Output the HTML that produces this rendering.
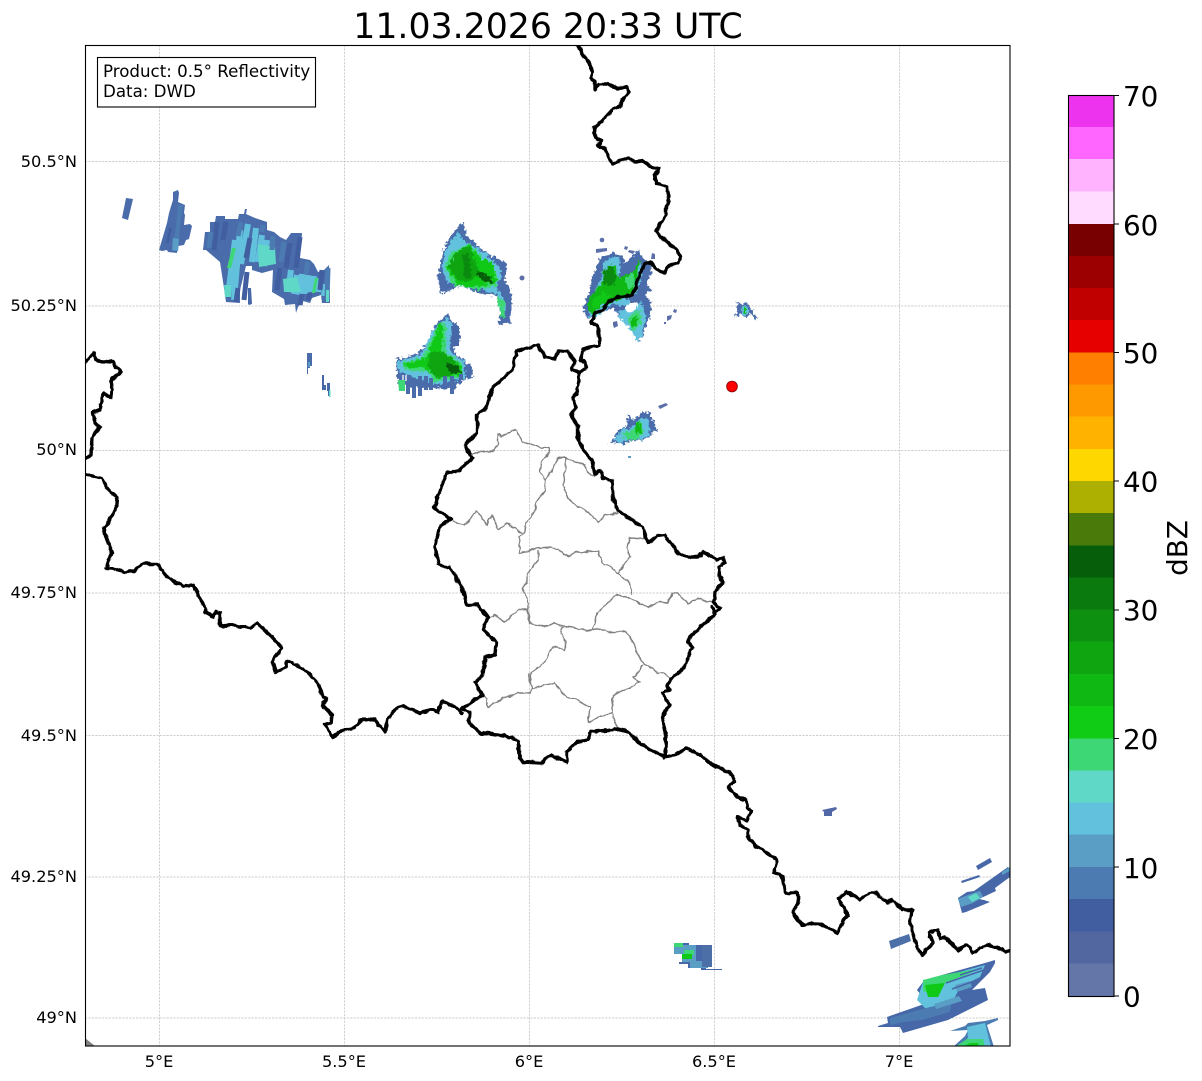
<!DOCTYPE html>
<html><head><meta charset="utf-8"><title>Radar</title>
<style>
html,body{margin:0;padding:0;background:#fff}
svg{display:block}
text{font-family:"DejaVu Sans",sans-serif;fill:#000}
</style></head><body>
<svg width="1202" height="1081" viewBox="0 0 1202 1081" xmlns="http://www.w3.org/2000/svg">
<defs>
<clipPath id="ax"><rect x="85" y="45" width="925" height="1001"/></clipPath>
<filter id="jag" filterUnits="userSpaceOnUse" x="0" y="0" width="1202" height="1081" color-interpolation-filters="sRGB">
<feTurbulence type="fractalNoise" baseFrequency=".32" numOctaves="2" seed="4" result="n"/>
<feDisplacementMap in="SourceGraphic" in2="n" scale="7" xChannelSelector="R" yChannelSelector="G"/>
</filter>
<filter id="wig" filterUnits="userSpaceOnUse" x="0" y="0" width="1202" height="1081" color-interpolation-filters="sRGB">
<feTurbulence type="fractalNoise" baseFrequency=".14" numOctaves="2" seed="9" result="n"/>
<feDisplacementMap in="SourceGraphic" in2="n" scale="4" xChannelSelector="R" yChannelSelector="G"/>
</filter>
</defs>
<rect width="1202" height="1081" fill="#fff"/>
<text x="548" y="38" font-size="34.7" text-anchor="middle">11.03.2026 20:33 UTC</text>

<g stroke="#bdbdbd" stroke-width=".7" stroke-dasharray="2.2 1.2" fill="none">
<path d="M159.5 45V1046M344.5 45V1046M529.5 45V1046M714.5 45V1046M899.5 45V1046"/>
<path d="M85 161.5H1010M85 306H1010M85 450.5H1010M85 593H1010M85 735.5H1010M85 877H1010M85 1018H1010"/>
</g>

<g clip-path="url(#ax)">
<!-- west small, crisp columns -->
<path d="M126 198l7 1-5 21-6-2z" fill="#4a6cab"/>
<path d="M173 192l5-2 1 3-1 9 7 3-1 8 1 2-1 10 6-1 2 2-3 13-3 1-2 5-6 1-1 7-9-1-1-2-5 1-3-1 8-27 2-10 3-10 1-3z" fill="#4a6cab"/>
<path d="M178 205h5l-3 22-2 24h-6l4-24z" fill="#4c7bb2"/>
<path d="M173 238l6 1-1 12-6-1z" fill="#5a9dc5"/>
<path d="M169 228l3 0-3 15-3 0z" fill="#415ea1"/>

<!-- big west blob, stepped -->
<path d="M203 250L205 232L210 232L210 222L215 222L216 216L225 216L225 219L238 219L239 214L244 214L245 209L247 209L246 214L255 218L267 222L267 230L274 232L280 237L286 240L291 233L302 233L300 258L310 260L314 264L318 272L324 270L329 265L330 303L322 303L321 295L312 298L310 303L303 301L298 307L296 313L295 304L285 305L284 299L272 292L273 270L262 273L252 270L252 266L246 266L243 278L240 290L240 303L226 302L224 288L220 262L206 250Z" fill="#4a6cab"/>
<g fill="none" stroke="#62c2dd" stroke-width="6">
<path d="M228 296L235 240M234 300L240 230M241 264L248 224M252 262L256 228M258 262L262 235M264 266L267 240M270 264L271 246"/>
<path d="M288 292L291 270M294 294L297 275M300 295L302 274M306 294L308 275M312 292L314 276M318 292L319 278M324 296L325 284"/>
</g>
<path d="M258 244l17 3 1 17-17 3z" fill="#5fd8c8"/>
<path d="M283 279l14-2 4 15-17 0z" fill="#5fd8c8"/>
<path d="M232 248l4 0-5 20-4 0z" fill="#3dd875"/>
<path d="M315 278l3 0-3 15-3 0z" fill="#3dd875"/>
<g fill="none" stroke="#415ea1" stroke-width="5">
<path d="M214 250L217 222M223 240L226 222M246 258L250 238M244 300L247 272M236 302L238 288M277 290L280 268M286 268L290 243M296 268L300 237M320 290L322 270M300 305L302 294M308 300L310 293"/>
</g>
<g fill="none" stroke="#4c7bb2" stroke-width="5">
<path d="M209 248L211 232M238 236L241 222M262 232L263 225M272 250L273 236M281 262L284 242M306 274L308 262M327 300L328 268"/>
</g>
<path d="M248 288h3l1 16-3 1-1-1z" fill="#4667a8"/>
<path d="M224 285h7v12h-6z" fill="#5fd8c8"/>
<path d="M326 290l3 0 0 12-3 0z" fill="#5fd8c8"/>

<g filter="url(#jag)">
<!-- north central blob -->
<path d="M463 222l2 7 1 6 7 6 14 12 20 11-2 19 5 4 2 14-2 22-12 3 2-13-2-17-18-2-20-8-20 8-2-18 4-20 3-10 7-12z" fill="#4a6cab"/>
<path d="M458 232l7 9 22 13 15 17-5 17 9 16-2 14-4-6-2-18-18-5-18-5-15-2-5-13 3-18z" fill="#62c2dd"/>
<path d="M450 253l20-9 27 29v13l-20 4-24-5-8-17z" fill="#3dd875"/>
<path d="M455 253l15-8 10 13 13 5 4 20-24 4-16-2-10-17z" fill="#10c816"/>
<path d="M456 252l14-6 9 26-9 10-13-2-9-15z" fill="#0fa510"/>
<path d="M462 254l6 0 4 24-7 0z" fill="#0b8a10"/>
<path d="M477 271l13 5 4 7h-9l-9-8z" fill="#075e0a"/>
<path d="M497 297l8 4-2 8-6-3zM500 308l5 2-1 8-4-3z" fill="#3dd875"/>
<!-- lower central blob -->
<path d="M448 313L452 322L458 325L460 340L453 348L457 355L473 367L472 378L462 380L456 388L410 388L398 384L396 360L418 353L427 342L435 325Z" fill="#4a6cab"/>
<path d="M447 317L452 325L450 352L465 362L465 378L435 385L400 372L397 362L420 355L433 330Z" fill="#62c2dd"/>
<path d="M443 322L447 328L445 352L462 363L463 377L433 382L430 372L405 370L403 363L423 357L435 332Z" fill="#3dd875"/>
<path d="M440 323L443 330L442 352L460 365L463 375L437 378L423 367L410 368L404 364L426 358L433 340Z" fill="#10c816"/>
<path d="M430 352H444L457 362L450 377L435 378L427 366Z" fill="#0fa510"/>
<path d="M445 362L458 366L463 373L450 373Z" fill="#075e0a"/>

<!-- Vianden blob -->
<path d="M600 258l12-5 10 2 3 8 13-13 4 7 8 6 2 7-5 15 5 5-7 5 7 7-2 15-8 21-4 3-8-13-10-10-7-10-8 2-12 8-8-1-2-10 7-17 2-12z" fill="#4a6cab"/>
<path d="M604 262l8-5 8 2-1 18 16-5 5-10 2 14-6 18-10 3 4 7-6 2-12-2-14 12-8 1-1-8 6-18 6-12z" fill="#62c2dd"/>
<path d="M588 308l2-11 13-15 4-15 8-2 3 12 15-5 8-14-3 14-5 23-30 10-11 10z" fill="#10b814"/>
<path d="M603 270l9-4 6 11-5 9-9-2z" fill="#0b8a10"/>
<path d="M592 300l12-8 8 4-14 10-5 4z" fill="#10c816"/>
<path d="M625 279l8-7 3 14-8 3z" fill="#3dd875"/>
<path d="M627 305l15-3 4 13-5 23-4 3-7-12-9-9-3-8 9-2 4 2z" fill="#62c2dd"/>
<path d="M628 317l12-7 2 13-8 7-4-4z" fill="#3dd875"/>
<path d="M630 318l7-3 0 9-5 3z" fill="#10b814"/>
<path d="M626 305l12-3-2 9-9 2z" fill="#fff"/>
<!-- east small -->
<path d="M736 302l6 2 5-2 5 8 5 8-2 1-5-5-3 3-3-1-5-2-4 4-1-2 4-5-1-5z" fill="#4a6cab"/>
<path d="M742 306l5 1 1 7-5 2z" fill="#62c2dd"/>
<path d="M744 308l2 0 0 5-2 0z" fill="#10b814"/>
<!-- blob 8 -->
<path d="M609 443l5-4 4-9 9-4 1-12 5 7 9-9 8 0 4 12 3 6-10 9-18 2-6 4-3-2-7 0z" fill="#4a6cab"/>
<path d="M614 440l8-11 10-1 8-9 8-1 2 16-8 5-14 1-8 3z" fill="#62c2dd"/>
<path d="M622 433l10-3 8-9 4 11-6 7-11 1z" fill="#3dd875"/>
<path d="M635 424l5-2 2 10-5 3z" fill="#10b814"/>
</g>

<!-- hatch under lower central blob -->
<g fill="none" stroke="#4a6cab" stroke-width="4">
<path d="M408 378v16M414 378v20M420 376v20M426 376v14M431 378v12M445 376v13M452 376v18M461 374v6"/>
</g>
<path d="M398 380h7v11h-6z" fill="#3dd875"/>
<g stroke="#fff" stroke-width="1.300"><path d="M403 375v5M406 375v6M411 389v9M417 390v8M423 389v10M434 388v10M441 389v9M448 388v8"/></g>
<path d="M451 326h8v20h-6z" fill="#4667a8"/>

<!-- crisp pieces -->
<g fill="#5a6fa8"><circle cx="602" cy="240" r="2.300"/><circle cx="522" cy="278" r="2.500"/><path d="M596 249l11-1 0 3-11 2zM625 246l3 1-1 3-3-1zM629 250l6 1-2 3-5-2zM652 253l3 1 0 5-4 0zM613 322l4-1 1 5-4 2-1-3zM674 309l3 1-1 3-3-1zM667 316l5-1-1 4-4 2zM664 322l2 0 0 2-2 0zM658 406l8-3 2 2-8 4z"/></g>
<path d="M628 456h3v2h-3z" fill="#5a9dc5"/>
<path d="M307 353h5v13h-2v2h-2v6h-1z" fill="#4a6cab"/>
<path d="M308 362h2v5h-2z" fill="#5a9dc5"/>
<path d="M322 375h2v10h2v5h-4zM327 383h3v13h-2v-5h-1z" fill="#4667a8"/>
<path d="M329 390h1.500v7h-1.500z" fill="#5fd8c8"/>

<!-- south centre -->
<path d="M674 943h15v2h23v22h-6v2h16v1h-21v-2h-13v-4h-9v-2h4v-8h-9v-9z" fill="#4667a8"/>
<path d="M674 945h22v16h12v7h-18v-6h-8v-8h-8z" fill="#5a9dc5"/>
<path d="M674 943h9v4h-9zM684 950h10v5h-10z" fill="#3dd875"/>
<path d="M682 954h10v5h-10z" fill="#10c816"/>
<path d="M702 945h10v22h-10z" fill="#4c6fa8"/>
<path d="M822 810l14-3 1 2-5 3v4h-8v-4z" fill="#5267a5"/>
<path d="M889 941l20-7 2 7-20 8z" fill="#4c6fa8"/>
<path d="M976 866l14-8 2 4-14 8zM961 881l18-6 1 2-18 6z" fill="#4667a8"/>
<path d="M958 898l9-6 7-1 34-24 2 3v7l-15 11 1 3-17 8 5 1 6 2-24 10-4 1z" fill="#4667a8"/>
<path d="M958 899l10-4 12-4 3 6-10 6-12 4z" fill="#5a9dc5"/>
<path d="M968 897l8-4 4 5-8 4z" fill="#5fd8c8"/>
<path d="M1002 872l8-5v4l-8 4z" fill="#5a9dc5"/>

<!-- SE big -->
<path d="M887 1017l40-14-10-13 6-8 19-7 43-12 10-3 0 3-5 9-18 18 13-2 3 12-40 20-45 13-3-6-22 0 0-1 10-3z" fill="#4667a8"/>
<path d="M923 982l62-17-5 12-20 10-8 16-25 7-10-10z" fill="#62c2dd"/>
<path d="M890 1018l40-11 22-5-2 10-28 8-18 2-14 3z" fill="#4c7bb2"/>
<path d="M923 980l19-5 36-6-5 3-28 11-7 14-10-4-5-2z" fill="#3dd875"/>
<path d="M925 985l20-2-7 14h-10z" fill="#10c816"/>
<path d="M955 985l15-4 2 6-15 5z" fill="#5a9dc5"/>
<path d="M934 1004l25-8 3 5-26 8z" fill="#5a9dc5"/>
<g fill="none" stroke="#4667a8" stroke-width="1.500"><path d="M946 983l38-13M952 989l28-10M960 975l22-7"/></g>
<path d="M950 1031L965 1026L968 1023L985 1021L998 1018L998 1020L987 1025L994 1047L953 1047L965 1036L968 1030Z" fill="#4c7bb2"/>
<path d="M967 1027L985 1023L991 1047L958 1047L968 1038Z" fill="#62c2dd"/>
<path d="M955 1047L967 1039L983 1039L985 1047Z" fill="#3dd875"/>
<path d="M962 1047l8-4 8 0 1 4z" fill="#10c816"/>

<!-- cantons -->
<g fill="none" stroke="#808080" stroke-width="1.400" stroke-linejoin="round" filter="url(#wig)">
<path d="M470 454l13-2 12-2 3-5v-12l4 4 13-8 8 13 19 6 7-1 1 6-9 9-1 10 6 8 12-22 7-1 1 11-3 17 5 13 10 9 10 5 10 11 7-8 13-2"/>
<path d="M565 457l3 2 17 6 5 10 5 2"/>
<path d="M546 480l-1 10-8 12-5 15-6 5-1 10-6 5 1 16 18-5 14-1 6 3 10 7 10-5 20-1 4 12 10 5 6 5 12 10 2 12"/>
<path d="M452 521l11 4 7-5 7-9 10 14 5-10 6 15 9-7 15 10"/>
<path d="M538 550v10l-6 7-5 8v8l-5 5 6 14v8h-10l-13 12-10-7-7 2"/>
<path d="M528 610l1 13 16 4 8-4 10 3 10 1 5 3h14l11-1 9 3h15l6 11 7 15 5 7 8 3 5 6 5-1 6 5"/>
<path d="M592 630l3-7 2-11 8-7 10-10 12 2 21 10 12-5 8 1 4-10h6l10 11 9-6 16 5"/>
<path d="M618 573l12-16-3-9 3-10 17 1"/>
<path d="M563 627l-2 6 4 9v9l-7-4h-6l-7 15-15 11 2 15 13-3 10-2 3 5 9 9 11 3 12 7-2 16 9-5 15-5 5 15"/>
<path d="M528 673l4 15"/>
<path d="M643 665l-10 12 7 6-10 4-17 8-1 18"/>
<path d="M532 688l-2 5h-12l-5 2-20 8-5 4-1-9-5-3"/>
</g>

<!-- borders -->
<g fill="none" stroke="#000" stroke-width="3.400" stroke-linejoin="round" stroke-linecap="round" filter="url(#wig)">
<path d="M578 46L583 55L589 62L593 73L591 78L595 82L595 89L599 84L608 84L617 88L627 87L629 92L622 100L621 106L613 109L603 120L594 128L595 137L602 141L598 146L605 149L612 164L620 161L628 158L635 162L643 161L650 166L659 168L655 175L656 183L667 187L669 197L666 208L666 215L656 231L665 240L677 250L681 257L678 263L670 265L664 273L655 268L650 263L645 264L640 273L636 287L632 295L620 297L608 302L603 310L595 313L591 322L598 327L600 345L590 347L583 349L581 360L585 362L587 368L578 372L572 370L575 362L568 352L558 351L555 359L545 357L538 345L517 351L512 370L493 387L488 405L477 415L477 432L465 445L472 458L460 470L447 473L434 507L451 519L440 525L435 548L438 565L450 567L463 590L467 605L478 605L488 617L483 630L496 642L495 655L485 657L483 675L475 682L482 695L460 710"/>
<path d="M578 372L579 380L577 393L573 398L576 407L571 415L578 427L578 438L583 450L592 460L595 475L600 470L603 478L612 480L613 497L618 510L628 518L643 527L648 543L657 536L665 535L678 553L688 557L698 557L703 552L717 560L723 558L725 563L718 567L722 583L715 592L714 603L720 608L715 612L712 607L715 615L703 625L693 633L688 642L692 647L685 667L670 680L667 685L670 690L662 693L670 705L662 717L666 737L665 758"/>
<path d="M462 708L470 713L469 722L480 733L497 735L512 737L518 742L520 758L523 762L542 763L550 755L567 762L567 752L577 742L587 740L590 732L618 729L630 732L638 742L650 750L665 757L675 755L686 748L700 755L710 763L730 773L735 781L728 787L737 797L746 800L747 808L752 811L747 820L738 817L740 825L748 830L748 837L757 847L763 850L777 860L774 872L783 877L785 893L797 893L799 902L793 912L802 925L818 923L838 933L843 920L848 915L838 898L847 892L860 899L870 893L877 893L887 903L892 900L903 910L912 910L910 923L917 948L922 955L928 948L933 943L929 933L938 930L940 938L945 937L958 950L967 945L973 952L988 945L1003 950L1005 952L1012 950"/>
<path d="M83 365L93 353L97 361L113 362L117 368L121 371L112 380L111 397L103 393L100 410L92 413L95 422L100 427L92 438L91 455L83 462"/>
<path d="M83 474L102 478L107 488L117 497L116 510L104 528L107 540L112 553L106 568L112 568L125 572L135 571L142 564L157 564L167 577L183 586L193 585L204 605L205 612L213 617L215 612L220 613L220 626L235 625L250 628L258 623L282 648L272 661L276 672L285 668L287 661L303 668L318 683L323 697L327 698L322 705L332 715L331 723L325 725L333 737L340 731L352 729L363 719L375 720L385 732L388 718L398 707L403 706L420 713L432 710L438 712L442 701L458 709L462 713"/>
</g>
<path d="M85 1038L95 1046H85z" fill="#808080"/>
<circle cx="732" cy="386.500" r="5.400" fill="#ff0000" stroke="#800000" stroke-width=".8"/>
</g>

<rect x="85.500" y="45.500" width="924.500" height="1000.500" fill="none" stroke="#000" stroke-width="1.100"/>

<rect x="97.500" y="57.500" width="218" height="49.500" fill="#fff" stroke="#000" stroke-width="1.100"/>
<text x="103" y="77" font-size="16.670">Product: 0.5° Reflectivity</text>
<text x="103" y="97" font-size="16.670">Data: DWD</text>

<g font-size="16.200" text-anchor="end">
<text x="77" y="167">50.5°N</text>
<text x="77" y="311">50.25°N</text>
<text x="77" y="455">50°N</text>
<text x="77" y="598">49.75°N</text>
<text x="77" y="741">49.5°N</text>
<text x="77" y="882">49.25°N</text>
<text x="77" y="1023">49°N</text>
</g>
<g font-size="16.200" text-anchor="middle">
<text x="159" y="1067">5°E</text>
<text x="344" y="1067">5.5°E</text>
<text x="529" y="1067">6°E</text>
<text x="714" y="1067">6.5°E</text>
<text x="899" y="1067">7°E</text>
</g>

<!-- colorbar -->
<g>
<rect x="1068" y="95" width="46" height="32.500" fill="#ee33ee"/>
<rect x="1068" y="127" width="46" height="32.500" fill="#ff66ff"/>
<rect x="1068" y="159" width="46" height="33" fill="#ffb3ff"/>
<rect x="1068" y="191.500" width="46" height="33" fill="#ffdcff"/>
<rect x="1068" y="224" width="46" height="32.500" fill="#780000"/>
<rect x="1068" y="256" width="46" height="32.500" fill="#9d0000"/>
<rect x="1068" y="288" width="46" height="32.500" fill="#c00000"/>
<rect x="1068" y="320" width="46" height="33" fill="#e60000"/>
<rect x="1068" y="352.500" width="46" height="32.500" fill="#ff8000"/>
<rect x="1068" y="384.500" width="46" height="32.500" fill="#ff9900"/>
<rect x="1068" y="416.500" width="46" height="32.500" fill="#ffb300"/>
<rect x="1068" y="449" width="46" height="32.500" fill="#ffd700"/>
<rect x="1068" y="481" width="46" height="32.500" fill="#adb000"/>
<rect x="1068" y="513" width="46" height="33" fill="#4a7a0a"/>
<rect x="1068" y="545.500" width="46" height="32.500" fill="#075e0a"/>
<rect x="1068" y="577.500" width="46" height="32.500" fill="#0b7a0e"/>
<rect x="1068" y="609.500" width="46" height="32.500" fill="#0d8f0f"/>
<rect x="1068" y="641.500" width="46" height="33" fill="#0fa510"/>
<rect x="1068" y="674" width="46" height="32.500" fill="#10b814"/>
<rect x="1068" y="706" width="46" height="33" fill="#10cc14"/>
<rect x="1068" y="738.500" width="46" height="32.500" fill="#3dd875"/>
<rect x="1068" y="770.500" width="46" height="32.500" fill="#5fd8c8"/>
<rect x="1068" y="802.500" width="46" height="32.500" fill="#62c2dd"/>
<rect x="1068" y="834.500" width="46" height="33" fill="#5a9dc5"/>
<rect x="1068" y="867" width="46" height="32.500" fill="#4c7bb2"/>
<rect x="1068" y="899" width="46" height="33" fill="#415ea1"/>
<rect x="1068" y="931.500" width="46" height="32.500" fill="#52679f"/>
<rect x="1068" y="963.500" width="46" height="32.500" fill="#6475a7"/>
</g>
<rect x="1068.500" y="95.500" width="45.500" height="901" fill="none" stroke="#000" stroke-width="1.100"/>
<path d="M1114 95.500h5M1114 224h5M1114 352.500h5M1114 481h5M1114 610h5M1114 738.500h5M1114 867h5M1114 996h5" stroke="#000" stroke-width="1.100"/>
<g font-size="27.800">
<text x="1123" y="106">70</text>
<text x="1123" y="235">60</text>
<text x="1123" y="363">50</text>
<text x="1123" y="491.500">40</text>
<text x="1123" y="620">30</text>
<text x="1123" y="749">20</text>
<text x="1123" y="878">10</text>
<text x="1123" y="1006.500">0</text>
</g>
<text font-size="27.800" text-anchor="middle" transform="translate(1187 548) rotate(-90)">dBZ</text>
</svg>
</body></html>
